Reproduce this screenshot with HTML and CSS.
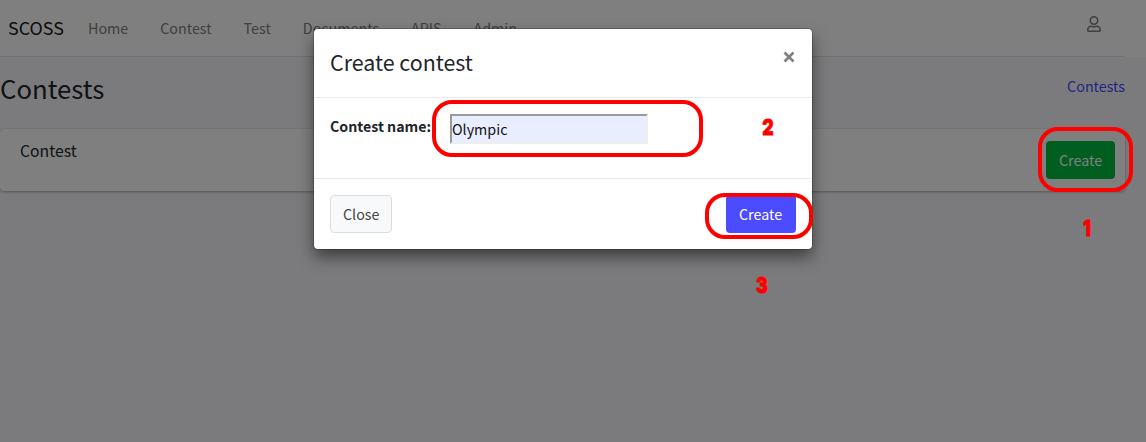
FILE: index.html
```html
<!DOCTYPE html>
<html lang="en">
<head>
<meta charset="utf-8">
<title>SCOSS</title>
<link rel="stylesheet" href="styles.css">
</head>
<body>
<div class="page">
  <nav class="navbar">
    <a class="brand">SCOSS</a>
    <div class="nav-links"><a>Home</a><a>Contest</a><a>Test</a><a>Documents</a><a>APIS</a><a>Admin</a></div>
    <svg class="user-icon" width="14" height="16" viewBox="0 0 448 512" fill="currentColor"><path d="M313.600 304c-28.700 0-42.500 16-89.600 16s-60.800-16-89.600-16C60.200 304 0 364.200 0 438.400V464c0 26.500 21.500 48 48 48h352c26.500 0 48-21.500 48-48v-25.600c0-74.200-60.200-134.400-134.400-134.400zM400 464H48v-25.600c0-47.600 38.800-86.400 86.400-86.400 14.600 0 38.300 16 89.600 16 51.700 0 74.900-16 89.600-16 47.600 0 86.400 38.800 86.400 86.400V464zM224 288c79.500 0 144-64.500 144-144S303.500 0 224 0 80 64.500 80 144s64.500 144 144 144zm0-240c52.900 0 96 43.100 96 96s-43.100 96-96 96-96-43.100-96-96 43.100-96 96-96z"/></svg>
  </nav>
  <header class="content-header">
    <h1>Contests</h1>
    <a class="crumb">Contests</a>
  </header>
  <section class="card">
    <h3>Contest</h3>
    <button class="btn btn-success">Create</button>
  </section>
</div>
<div class="backdrop">
  <div class="modal">
    <div class="modal-header">
      <h4>Create contest</h4>
      <button class="close" aria-label="Close"><svg width="12" height="12" viewBox="0 0 12 12"><path d="M1.500 1.500l9 9M10.500 1.500l-9 9"/></svg></button>
    </div>
    <div class="modal-body">
      <label for="name">Contest name:</label>
      <input id="name" class="name-input" type="text" value="Olympic">
    </div>
    <div class="modal-footer">
      <button class="btn btn-default">Close</button>
      <button class="btn btn-primary">Create</button>
    </div>
  </div>
</div>
<div class="mark mark-create"></div>
<div class="mark mark-name"></div>
<div class="mark mark-submit"></div>
<span class="step step-one">1</span>
<span class="step step-two">2</span>
<span class="step step-three">3</span>
</body>
</html>
```
FILE: styles.css
```css
* { box-sizing: border-box; }
body {
  margin: 0;
  height: 442px;
  overflow: hidden;
  background: #f6f6fa;
  color: #212529;
  font-family: "Noto Sans CJK JP", "Noto Sans", sans-serif;
  font-size: 14.3px;
  line-height: 24px;
}
h1, h3, h4 { margin: 0; font-weight: 400; }
.navbar {
  display: flex;
  align-items: center;
  height: 57px;
  padding: 0 45px 2px 8px;
  background: #fff;
  position: relative;
}
.navbar::after {
  content: "";
  position: absolute;
  left: 0;
  bottom: 0;
  width: 1125px;
  height: 1px;
  background: #dee2e6;
}
.brand { font-size: 17.9px; width: 80px; padding-bottom: 2px; color: #191919; }
.nav-links { display: flex; gap: 32px; color: #808080; }
.user-icon { margin: -7px 0 0 auto; color: #808080; }
.content-header {
  display: flex;
  justify-content: space-between;
  width: 1125px;
  height: 72px;
  padding-top: 13px;
}
.content-header h1 { font-size: 25.75px; line-height: 36px; }
.crumb { padding-top: 4px; color: #4b4bff; }
.card {
  display: flex;
  justify-content: space-between;
  align-items: flex-start;
  width: 1125px;
  height: 62px;
  padding: 12px 10px 12px 20px;
  background: #fff;
  border-radius: 4px;
  box-shadow: 0 0 1px rgba(0,0,0,.125), 0 1px 3px rgba(0,0,0,.3);
}
.card h3 { font-size: 15.75px; line-height: 20px; }
.btn {
  height: 38px;
  padding: 0 12px;
  border: 1px solid transparent;
  border-radius: 4px;
  font: inherit;
  color: #fff;
}
.btn-success { width: 69px; background: #00bd40; }
.btn-default { width: 62px; padding: 0 13px 0 12px; background: #f8f9fa; border-color: #ddd; color: #444; }
.btn-primary { width: 70px; padding: 0 13px 0 12px; background: #4b4bff; }
.backdrop {
  position: absolute;
  inset: 0;
  padding-top: 29px;
  padding-left: 314px;
  background: rgba(0,0,0,.5);
}
.modal {
  width: 498px;
  height: 220px;
  background: #fff;
  border-radius: 4px;
  box-shadow: 0 0 0 1px rgba(0,0,0,.2), 0 8px 16px rgba(0,0,0,.5);
}
.modal-header {
  display: flex;
  justify-content: space-between;
  height: 69px;
  padding: 15px 17px 0 16px;
  border-bottom: 1px solid #e9ecef;
}
.modal-header h4 { font-size: 21.4px; line-height: 36px; }
.close { height: 12px; margin-top: 7px; padding: 0; border: 0; background: none; }
.close svg { display: block; }
.close path { stroke: #7f7f7f; stroke-width: 2.6; fill: none; }
.modal-body {
  display: flex;
  height: 80px;
  padding: 16px 16px 0;
}
.modal-body label { width: 120px; font-size: 14.2px; font-weight: 700; }
.name-input {
  width: 198px;
  height: 30px;
  padding: 0 0 2px;
  border: 2px solid;
  border-color: #999 #eee #eee #999;
  background: #e8edff;
  color: #111;
  font: inherit;
}
.modal-footer {
  display: flex;
  justify-content: space-between;
  height: 71px;
  padding: 16px;
  border-top: 1px solid #e9ecef;
}
.mark {
  position: absolute;
  border: 4px solid #f00;
  border-radius: 20px;
}
.mark-create { left: 1038px; top: 127px; width: 95px; height: 65px; }
.mark-name { left: 432px; top: 100px; width: 271px; height: 57px; }
.mark-submit { left: 705px; top: 193px; width: 108px; height: 46px; }
.step {
  position: absolute;
  width: 20px;
  text-align: center;
  color: #f00;
  font: 900 22px/24px Inter, sans-serif;
  -webkit-text-stroke: .8px #f00;
  transform: scaleX(.8);
}
.step-one { left: 1077px; top: 216px; }
.step-two { left: 758px; top: 115px; }
.step-three { left: 752px; top: 273px; }
```
